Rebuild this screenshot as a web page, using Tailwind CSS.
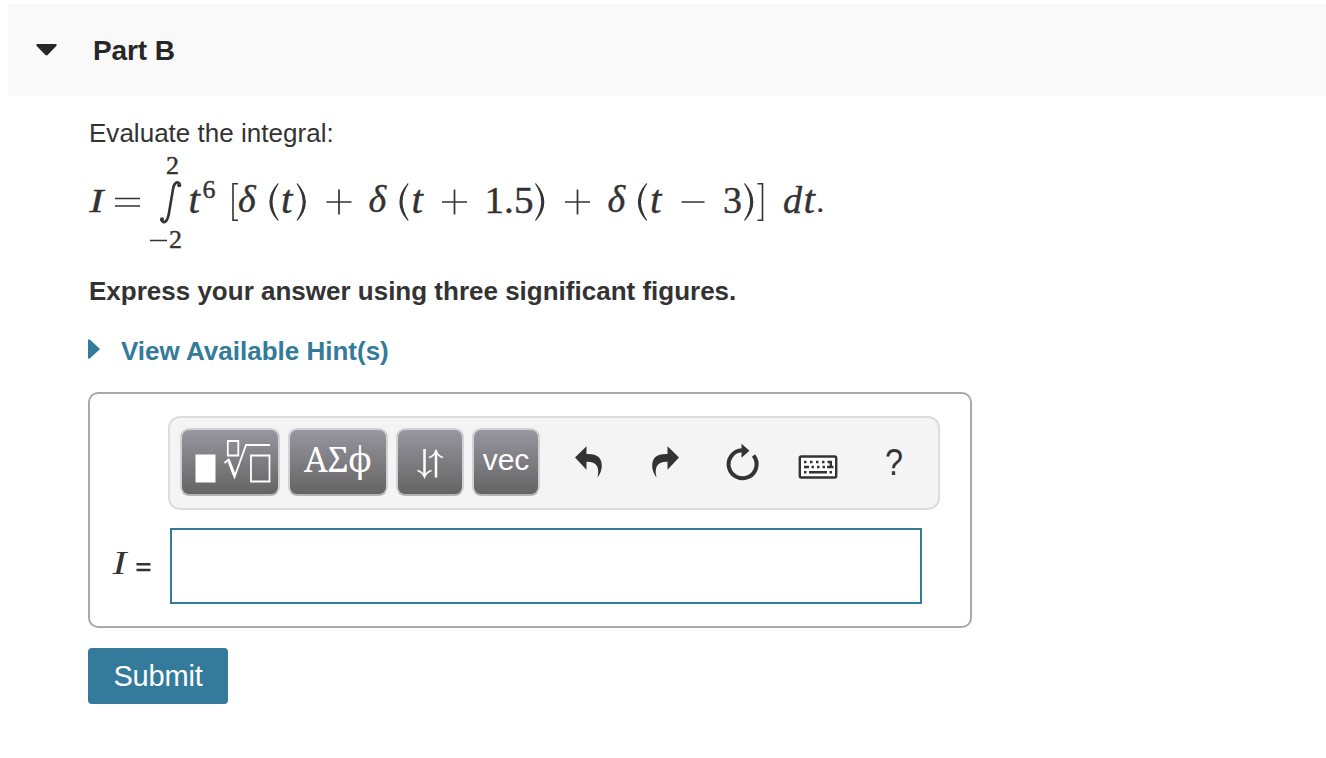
<!DOCTYPE html>
<html lang="en">
<head>
    <meta charset="UTF-8">
    <meta name="viewport" content="width=device-width, initial-scale=1.0">
    <title>Part B</title>
    <script src="https://cdn.jsdelivr.net/npm/@tailwindcss/browser@4"></script>
</head>
<body class="bg-white text-[#333] font-['Liberation_Sans',Arial,sans-serif] h-[758px] overflow-hidden">
    <!-- Part header -->
    <header class="mt-1 ml-2 h-[92px] bg-[#f9f9f9] flex items-center pl-7">
        <svg class="w-[21px] h-3 shrink-0" viewBox="0 0 21 12" fill="#262626"><path d="M1.5 0h18q2 .6.8 2.1L11.6 11q-1.1.9-2.2 0L.7 2.1Q-.5.6 1.5 0z"/></svg>
        <h1 class="ml-9 pt-px text-[28px] leading-8 font-bold text-[#262626] whitespace-nowrap tracking-[-0.1px]">Part B</h1>
    </header>

    <main class="ml-[88px]">
        <p class="pt-[21px] h-[54px] pl-px text-[26px] leading-8 whitespace-nowrap tracking-[0.02px]">Evaluate the integral:</p>

        <!-- Integral -->
        <svg class="block w-[750px] h-[110px] font-['Liberation_Serif',serif] text-[38px]" viewBox="88 150 750 110" fill="#333">
            <g stroke="#333" stroke-width=".4">
                <text x="89.5" y="212" font-style="italic" font-size="33" textLength="14" lengthAdjust="spacingAndGlyphs">I</text>
                <text x="166" y="174" font-size="26">2</text>
                <text x="169" y="248" font-size="26">2</text>
                <text x="188.500" y="212.500" font-style="italic" font-size="41">t</text>
                <text x="202.500" y="198" font-size="26">6</text>
                <text x="238" y="212" font-style="italic">δ</text>
                <text x="281" y="212.500" font-style="italic" font-size="41">t</text>
                <text x="368.500" y="212" font-style="italic">δ</text>
                <text x="411.500" y="212.500" font-style="italic" font-size="41">t</text>
                <text x="484.500" y="212.500" textLength="49" lengthAdjust="spacingAndGlyphs">1.5</text>
                <text x="607.500" y="212" font-style="italic">δ</text>
                <text x="650" y="212.500" font-style="italic" font-size="41">t</text>
                <text x="723" y="212.500">3</text>
                <text x="783" y="212.500" font-style="italic">d</text>
                <text x="803.500" y="212.500" font-style="italic" font-size="41">t</text>
                <text x="816.500" y="212" font-size="30">.</text>
            </g>
            <!-- Operators -->
            <path d="M115 198.500h25M115 206h25M150 240.500h17M326.500 202h25M339 189.500v25M442 202h25M454.500 189.500v25M565 202h25M577.500 189.500v25M681.500 202h23" fill="none" stroke="#333" stroke-width="1.700"/>
            <!-- Integral sign -->
            <path d="M179.800 184.500C178.500 180.500 174.500 182 173.200 188L168.800 214C167.300 222 163.500 224.500 161.200 219.800" fill="none" stroke="#333" stroke-width="2.600"/>
            <circle cx="179.200" cy="185.200" r="2"/><circle cx="162" cy="219.300" r="2"/>
            <!-- Brackets and parentheses -->
            <path d="M238 183.800h-5v36.500h5M757.500 183.800h5v36.500h-5" fill="none" stroke="#333" stroke-width="1.600"/>
            <g stroke="#333" stroke-width="1.100">
                <path d="M278.200 183.500q-16.500 18.500 0 37q-12.500-18.500 0-37z"/>
                <path d="M297 183.500q16.500 18.500 0 37q12.500-18.500 0-37z"/>
                <path d="M408.200 183.500q-16.500 18.500 0 37q-12.500-18.500 0-37z"/>
                <path d="M535.500 183.500q16.500 18.500 0 37q12.500-18.500 0-37z"/>
                <path d="M646.700 183.500q-16.500 18.500 0 37q-12.500-18.500 0-37z"/>
                <path d="M744.500 183.500q16.500 18.500 0 37q12.500-18.500 0-37z"/>
            </g>
        </svg>

        <p class="mt-[15px] pl-px text-[26px] leading-8 font-bold whitespace-nowrap">Express your answer using three significant figures.</p>

        <a href="#" class="mt-7 flex items-center h-8 text-[26px] leading-8 font-bold text-[#337a9b]">
            <svg class="w-3 h-5 mb-1" viewBox="0 0 12 20" fill="currentColor"><path d="M0 1Q.3-.5 2 .8l9.300 8.400q.9.800 0 1.600L2 19.200Q.3 20.500 0 19z"/></svg>
            <span class="ml-[21px] whitespace-nowrap">View Available Hint(s)</span>
        </a>

        <!-- Answer box -->
        <section class="mt-[25px] w-[884px] h-[236px] border-2 border-[#a9a9a9] rounded-[10px] pt-[22px]">
            <div class="ml-[78px] w-[772px] h-[94px] bg-[#f4f4f4] border-2 border-[#dcdcdc] rounded-xl flex items-start pt-[10px] pl-[10px] gap-2">
                <button class="w-[100px] h-[68px] rounded-[9px] border-2 border-[#d2d2d2] border-b-[#b4b4b4] bg-linear-to-b from-[#9896a0] to-[#646464]">
                    <svg class="w-24 h-16" viewBox="182 430 96 64" fill="none" stroke="#fff">
                        <path d="M195.500 454.500h20v28h-20z" fill="#fff" stroke="none"/>
                        <path d="M227.800 441h10.500v14.500h-10.500zM251 455.500h18.500v26h-18.500z" stroke-width="1.800"/>
                        <path d="M224.500 463l4-3.500 6 17.500L246 445h24" stroke-width="1.800"/>
                        <path d="M228.500 460l6 15.500" stroke-width="3"/>
                    </svg>
                </button>
                <button class="w-[100px] h-[68px] rounded-[9px] border-2 border-[#d2d2d2] border-b-[#b4b4b4] bg-linear-to-b from-[#9896a0] to-[#646464] text-[34px] font-['Noto_Serif','Liberation_Serif',serif]">
                    <svg class="w-24 h-16" viewBox="290 430 96 64" fill="#fff"><text x="304" y="472" textLength="68" lengthAdjust="spacingAndGlyphs">ΑΣϕ</text></svg>
                </button>
                <button class="w-[68px] h-[68px] rounded-[9px] border-2 border-[#d2d2d2] border-b-[#b4b4b4] bg-linear-to-b from-[#9896a0] to-[#646464]">
                    <svg class="w-16 h-16" viewBox="398 430 64 64" fill="none" stroke="#fff" stroke-width="2.500">
                        <path d="M424.500 449v27M436 477.500v-27"/>
                        <path d="M417.500 470.500q5 1.500 7 6.500 2-5 7-6.500M429 457.500q5-1.500 7-6.500 2 5 7 6.500" stroke-width="1.600"/>
                    </svg>
                </button>
                <button class="w-[68px] h-[68px] rounded-[9px] border-2 border-[#d2d2d2] border-b-[#b4b4b4] bg-linear-to-b from-[#9896a0] to-[#646464] text-white text-[30px] leading-8 pb-1">vec</button>
                <svg class="w-[360px] h-[68px] text-[37px]" viewBox="548 428 360 68" fill="#333">
                    <path d="M575 457.500L586.500 446.300V454C597 453.500 602 457.500 601.800 466.500Q601.600 472 597.500 477.500C600 467 596.500 461.500 586.500 461.800V469.800z"/>
                    <path d="M679 457.500L667.500 446.300V454C657 453.500 652 457.500 652.200 466.500Q652.400 472 656.500 477.500C654 467 657.500 461.500 667.500 461.800V469.800z"/>
                    <path d="M742 450.300A14 14 0 1 0 753.500 455.500" fill="none" stroke="#333" stroke-width="4"/>
                    <path d="M741.500 443.800l8 7-8 7z"/>
                    <rect x="799.800" y="456.500" width="36.400" height="21" rx="1.500" fill="#fff" stroke="#333" stroke-width="2.400"/>
                    <path d="M804 462h2.500m3.500 0h2.500m3.500 0h2.500m3.500 0h2.500m3 0h2.500M804 467h5m2.500 0h2.500m3 0h2.500m3 0h2.500m2 0h6.500M830.800 468.200v-7.400M804 472.200h2.500m2.500 0h18m2.500 0h2.500" fill="none" stroke="#333" stroke-width="2.400"/>
                    <text x="885" y="474.500" font-size="36" textLength="18" lengthAdjust="spacingAndGlyphs">?</text>
                </svg>
            </div>
            <div class="mt-[18px] flex items-center">
                <svg class="w-[80px] h-[76px]" viewBox="90 528 80 76" fill="#333">
                    <text x="112.500" y="574" font-size="33" font-style="italic" class="font-['Liberation_Serif',serif]" textLength="14" lengthAdjust="spacingAndGlyphs">I</text>
                    <path d="M136.500 564.300h14M136.500 570h14" stroke="#333" stroke-width="2.500"/>
                </svg>
                <input type="text" aria-label="Answer" class="w-[752px] h-[76px] border-2 border-[#337a9b] bg-white px-3 text-[28px] outline-none">
            </div>
        </section>

        <button class="mt-5 w-[140px] h-14 rounded bg-[#337a9b] text-white text-[29px] leading-8 tracking-[-0.2px]">Submit</button>
    </main>
</body>
</html>
